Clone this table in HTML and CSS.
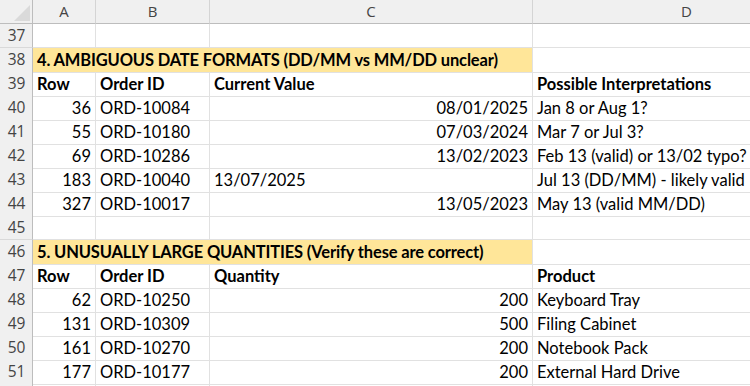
FILE: index.html
```html
<!DOCTYPE html>
<html>
<head>
<meta charset="utf-8">
<link rel="stylesheet" href="styles.css">
</head>
<body>
<div class="sheet">
  <div class="row colhead">
    <div class="corner"><span class="tri"></span></div>
    <div class="ch">A</div><div class="ch">B</div><div class="ch">C</div><div class="ch">D</div>
  </div>
  <div class="row"><div class="rh">37</div><div class="c"></div><div class="c"></div><div class="c"></div><div class="c"></div></div>
  <div class="row"><div class="rh">38</div><div class="c title">4. AMBIGUOUS DATE FORMATS (DD/MM vs MM/DD unclear)</div><div class="c"></div></div>
  <div class="row"><div class="rh">39</div><div class="c b">Row</div><div class="c b">Order ID</div><div class="c b">Current Value</div><div class="c b">Possible Interpretations</div></div>
  <div class="row"><div class="rh">40</div><div class="c r">36</div><div class="c">ORD-10084</div><div class="c r">08/01/2025</div><div class="c">Jan 8 or Aug 1?</div></div>
  <div class="row"><div class="rh">41</div><div class="c r">55</div><div class="c">ORD-10180</div><div class="c r">07/03/2024</div><div class="c">Mar 7 or Jul 3?</div></div>
  <div class="row"><div class="rh">42</div><div class="c r">69</div><div class="c">ORD-10286</div><div class="c r">13/02/2023</div><div class="c">Feb 13 (valid) or 13/02 typo?</div></div>
  <div class="row"><div class="rh">43</div><div class="c r">183</div><div class="c">ORD-10040</div><div class="c">13/07/2025</div><div class="c">Jul 13 (DD/MM) - likely valid</div></div>
  <div class="row"><div class="rh">44</div><div class="c r">327</div><div class="c">ORD-10017</div><div class="c r">13/05/2023</div><div class="c">May 13 (valid MM/DD)</div></div>
  <div class="row"><div class="rh">45</div><div class="c"></div><div class="c"></div><div class="c"></div><div class="c"></div></div>
  <div class="row"><div class="rh">46</div><div class="c title">5. UNUSUALLY LARGE QUANTITIES (Verify these are correct)</div><div class="c"></div></div>
  <div class="row"><div class="rh">47</div><div class="c b">Row</div><div class="c b">Order ID</div><div class="c b">Quantity</div><div class="c b">Product</div></div>
  <div class="row"><div class="rh">48</div><div class="c r">62</div><div class="c">ORD-10250</div><div class="c r">200</div><div class="c">Keyboard Tray</div></div>
  <div class="row"><div class="rh">49</div><div class="c r">131</div><div class="c">ORD-10309</div><div class="c r">500</div><div class="c">Filing Cabinet</div></div>
  <div class="row"><div class="rh">50</div><div class="c r">161</div><div class="c">ORD-10270</div><div class="c r">200</div><div class="c">Notebook Pack</div></div>
  <div class="row"><div class="rh">51</div><div class="c r">177</div><div class="c">ORD-10177</div><div class="c r">200</div><div class="c">External Hard Drive</div></div>
  <div class="row"><div class="rh"></div><div class="c"></div><div class="c"></div><div class="c"></div><div class="c"></div></div>
</div>
</body>
</html>
```
FILE: styles.css
```css
* { box-sizing: border-box; margin: 0; padding: 0; }
html, body { background: #fff; overflow: hidden; }
body { width: 750px; height: 386px; font-family: Lato, "Open Sans", sans-serif; color: #000; }
.sheet { width: 750px; height: 386px; overflow: hidden; }
.row {
  display: grid;
  grid-template-columns: 33px 63px 114px 323px 308px;
  height: 24px;
}
.c {
  border-right: 1px solid #e1e1e1;
  border-bottom: 1px solid #e1e1e1;
  font-size: 16.5px;
  line-height: 23px;
  padding: 1px 4px 0 4px;
  white-space: nowrap;
}
.c.r { text-align: right; }
.c.b { font-weight: 700; }
.c.title {
  grid-column: span 3;
  background: #ffe699;
  font-weight: 700;
  letter-spacing: -0.15px;
  border-right: 1px solid #e1e1e1;
}
.rh {
  background: #f0f0f0;
  border-right: 1px solid #bdbdbd;
  border-bottom: 1px solid #d9d9d9;
  color: #444;
  font-family: "Open Sans", sans-serif;
  font-size: 15.5px;
  line-height: 23px;
  text-align: center;
  padding-left: 1px;
}
.colhead { height: 24px; }
.corner {
  background: #f0f0f0;
  border-right: 1px solid #bdbdbd;
  border-bottom: 1px solid #bdbdbd;
  position: relative;
}
.tri {
  position: absolute;
  right: 2px;
  bottom: 2px;
  width: 0; height: 0;
  border-left: 16px solid transparent;
  border-bottom: 16px solid #dadada;
}
.ch {
  background: #f0f0f0;
  border-right: 1px solid #d4d4d4;
  border-bottom: 1px solid #bdbdbd;
  color: #444;
  font-family: "Open Sans", sans-serif;
  font-size: 15px;
  line-height: 23px;
  text-align: center;
}
```
